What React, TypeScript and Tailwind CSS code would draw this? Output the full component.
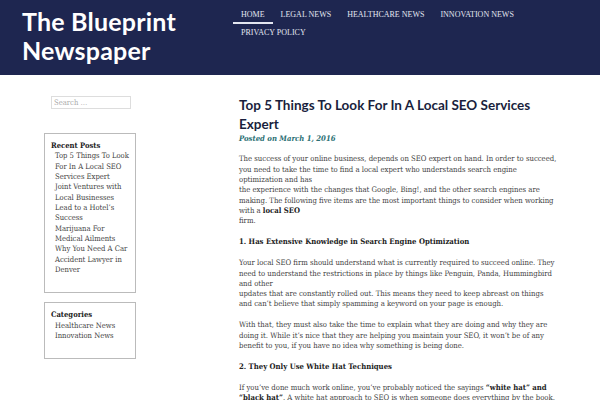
import React from "react";

const serif = { fontFamily: '"DejaVu Serif", serif', fontStretch: "condensed" as const };

export default function App() {
  const recent = [
    "Top 5 Things To Look For In A Local SEO Services Expert",
    "Joint Ventures with Local Businesses",
    "Lead to a Hotel’s Success",
    "Marijuana For Medical Ailments",
    "Why You Need A Car Accident Lawyer in Denver",
  ];
  return (
    <div className="w-[600px] h-[400px] overflow-hidden bg-white">
      <header className="h-[75px] bg-[#1e2650] flex">
        <div className="w-[211px] pl-[22px] pt-[7px]">
          <h1 className="text-white text-[25px] leading-[29px] font-bold tracking-[0.2px] font-['Lato',sans-serif]">
            The Blueprint Newspaper
          </h1>
        </div>
        <nav className="w-[330px] h-fit pt-[6px] flex flex-wrap content-start font-['Liberation_Serif',serif] text-[8px] text-[#e3e6f0] ml-[22px]">
          {["HOME", "LEGAL NEWS", "HEALTHCARE NEWS", "INNOVATION NEWS", "PRIVACY POLICY"].map((t, i) => (
            <div key={t} className={`px-2 h-[17.5px] pt-[4px] leading-[10px] ${i === 0 ? "border-b-2 border-[#e3e6f0]" : ""}`}>
              {t}
            </div>
          ))}
        </nav>
      </header>
      <div className="flex" style={serif}>
        <aside className="w-[195px] pl-[44px] pt-[21px] shrink-0">
          <div className="ml-[7px] w-[80px] h-[13px] border border-[#ddd] text-[7.6px] leading-[11px] text-[#aaa] px-[2px]">
            Search …
          </div>
          <div className="mt-[24px] w-[92px] border border-[#bbb] pl-[6px] pr-[6px] pt-[7px] pb-[17px] text-[7.6px] leading-[10.33px] text-[#444]">
            <div className="font-bold text-[#222]">Recent Posts</div>
            {recent.map((r) => (
              <div key={r} className="pl-[4px]">{r}</div>
            ))}
          </div>
          <div className="mt-[9px] w-[92px] border border-[#bbb] pl-[6px] pr-[6px] pt-[7px] pb-[17px] text-[7.6px] leading-[10.33px] text-[#444]">
            <div className="font-bold text-[#222]">Categories</div>
            <div className="pl-[4px]">Healthcare News</div>
            <div className="pl-[4px]">Innovation News</div>
          </div>
        </aside>
        <main className="w-[318.5px] ml-[44px] pt-[20.5px] text-[7.68px] leading-[10.3px] text-[#444]">
          <h2 className="text-[13.5px] leading-[19px] font-bold text-[#1a1f3d] font-['Lato',sans-serif]">
            Top 5 Things To Look For In A Local SEO Services Expert
          </h2>
          <div className="italic font-bold text-[#2a6f73]">Posted on March 1, 2016</div>
          <p className="mt-[10.7px]">
            The success of your online business, depends on SEO expert on hand. In order to succeed, you need to take the time to find a local expert who understands search engine optimization and has
            <br />
            the experience with the changes that Google, Bing!, and the other search engines are making. The following five items are the most important things to consider when working with a <b className="text-[#222]">local SEO</b>
            <br />
            firm.
          </p>
          <h3 className="font-bold text-[#222] mt-[10.7px]">1. Has Extensive Knowledge in Search Engine Optimization</h3>
          <p className="mt-[10.7px]">
            Your local SEO firm should understand what is currently required to succeed online. They need to understand the restrictions in place by things like Penguin, Panda, Hummingbird and other
            <br />
            updates that are constantly rolled out. This means they need to keep abreast on things and can’t believe that simply spamming a keyword on your page is enough.
          </p>
          <p className="mt-[10.7px]">
            With that, they must also take the time to explain what they are doing and why they are doing it. While it’s nice that they are helping you maintain your SEO, it won’t be of any benefit to you, if you have no idea why something is being done.
          </p>
          <h3 className="font-bold text-[#222] mt-[10.7px]">2. They Only Use White Hat Techniques</h3>
          <p className="mt-[10.7px]">
            If you’ve done much work online, you’ve probably noticed the sayings <b className="text-[#222]">“white hat” and “black hat”</b>. A white hat approach to SEO is when someone does everything by the book.
          </p>
        </main>
      </div>
    </div>
  );
}
